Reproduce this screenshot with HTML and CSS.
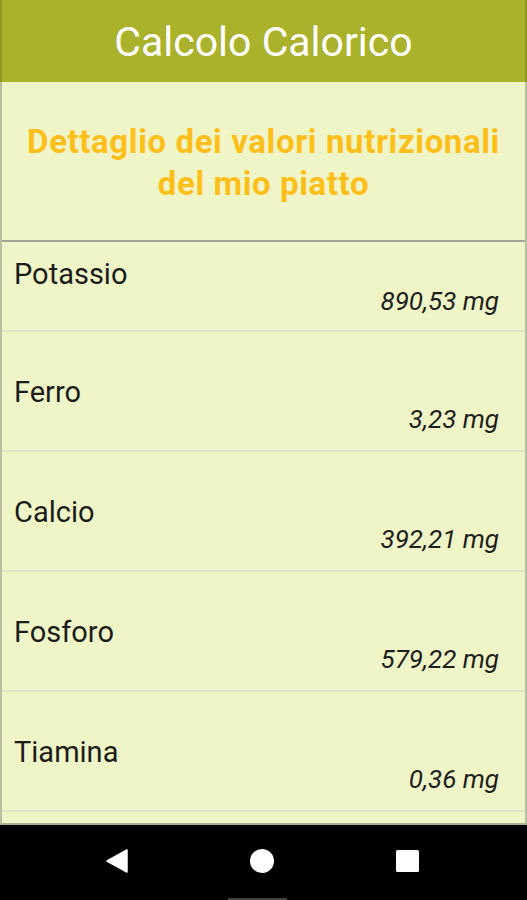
FILE: index.html
```html
<!DOCTYPE html>
<html lang="it">
<head>
<meta charset="utf-8">
<title>Calcolo Calorico</title>
<link rel="stylesheet" href="styles.css">
</head>
<body>
<div class="screen">
  <header class="appbar">Calcolo Calorico</header>
  <main class="content">
    <h1 class="heading">Dettaglio dei valori nutrizionali<br>del mio piatto</h1>
    <ul class="list">
      <li class="row first"><span class="name">Potassio</span><span class="value">890,53 mg</span></li>
      <li class="row"><span class="name">Ferro</span><span class="value">3,23 mg</span></li>
      <li class="row"><span class="name">Calcio</span><span class="value">392,21 mg</span></li>
      <li class="row"><span class="name">Fosforo</span><span class="value">579,22 mg</span></li>
      <li class="row"><span class="name">Tiamina</span><span class="value">0,36 mg</span></li>
    </ul>
  </main>
  <nav class="navbar">
    <svg class="nav-icon" width="22" height="24" viewBox="0 0 22 24"><path d="M21 1 L21 23 L1 12 Z" fill="#fff" stroke="#fff" stroke-linejoin="round" stroke-width="1.5"/></svg>
    <svg class="nav-icon" width="24" height="24" viewBox="0 0 24 24"><circle cx="12" cy="12" r="12" fill="#fff"/></svg>
    <svg class="nav-icon" width="23" height="22" viewBox="0 0 23 22"><rect x="0" y="0" width="23" height="22" rx="1.5" fill="#fff"/></svg>
    <span class="handle"></span>
  </nav>
</div>
</body>
</html>
```

FILE: styles.css
```css
* { box-sizing: border-box; }
html, body { margin: 0; padding: 0; }
body {
  width: 527px;
  height: 900px;
  overflow: hidden;
  font-family: Roboto, "Liberation Sans", sans-serif;
  background: #000;
}
.screen {
  display: flex;
  flex-direction: column;
  height: 900px;
}
.appbar {
  height: 82px;
  flex: none;
  background: #aab22c;
  color: #fff;
  font-size: 41px;
  display: flex;
  align-items: center;
  justify-content: center;
  padding-top: 2px;
  border-left: 2px solid #8f9626;
  border-right: 2px solid #8f9626;
}
.content {
  flex: 1;
  height: 743px;
  overflow: hidden;
  background: #eff5c6;
  border-left: 2px solid #b9bea0;
  border-right: 2px solid #b9bea0;
  border-bottom: 2px solid #a9ae94;
}
.heading {
  margin: 0;
  height: 160px;
  display: flex;
  align-items: center;
  justify-content: center;
  text-align: center;
  color: #ffbf1a;
  font-size: 33px;
  letter-spacing: 0.6px;
  font-weight: 700;
  line-height: 42px;
  padding-top: 4px;
  border-bottom: 2px solid #a2a49a;
}
.list {
  list-style: none;
  margin: 0;
  padding: 0;
}
.row {
  height: 120px;
  padding: 43px 26px 0 12px;
  border-bottom: 2px solid #dfe4c4;
  display: flex;
  flex-direction: column;
}
.row.first {
  height: 90px;
  padding-top: 15px;
}
.name {
  font-size: 29px;
  color: #1c1c1c;
  line-height: 34px;
}
.value {
  align-self: flex-end;
  font-size: 26px;
  font-style: italic;
  color: #1e1e1e;
  line-height: 30px;
  margin-top: -5px;
}
.navbar {
  height: 75px;
  flex: none;
  background: #000;
  display: flex;
  align-items: center;
  justify-content: flex-start;
  gap: 122px;
  position: relative;
  padding: 0 0 4px 106px;
}
.nav-icon { display: block; }
.handle {
  position: absolute;
  left: 228px;
  bottom: 0;
  width: 59px;
  height: 2px;
  background: #444;
}
```
